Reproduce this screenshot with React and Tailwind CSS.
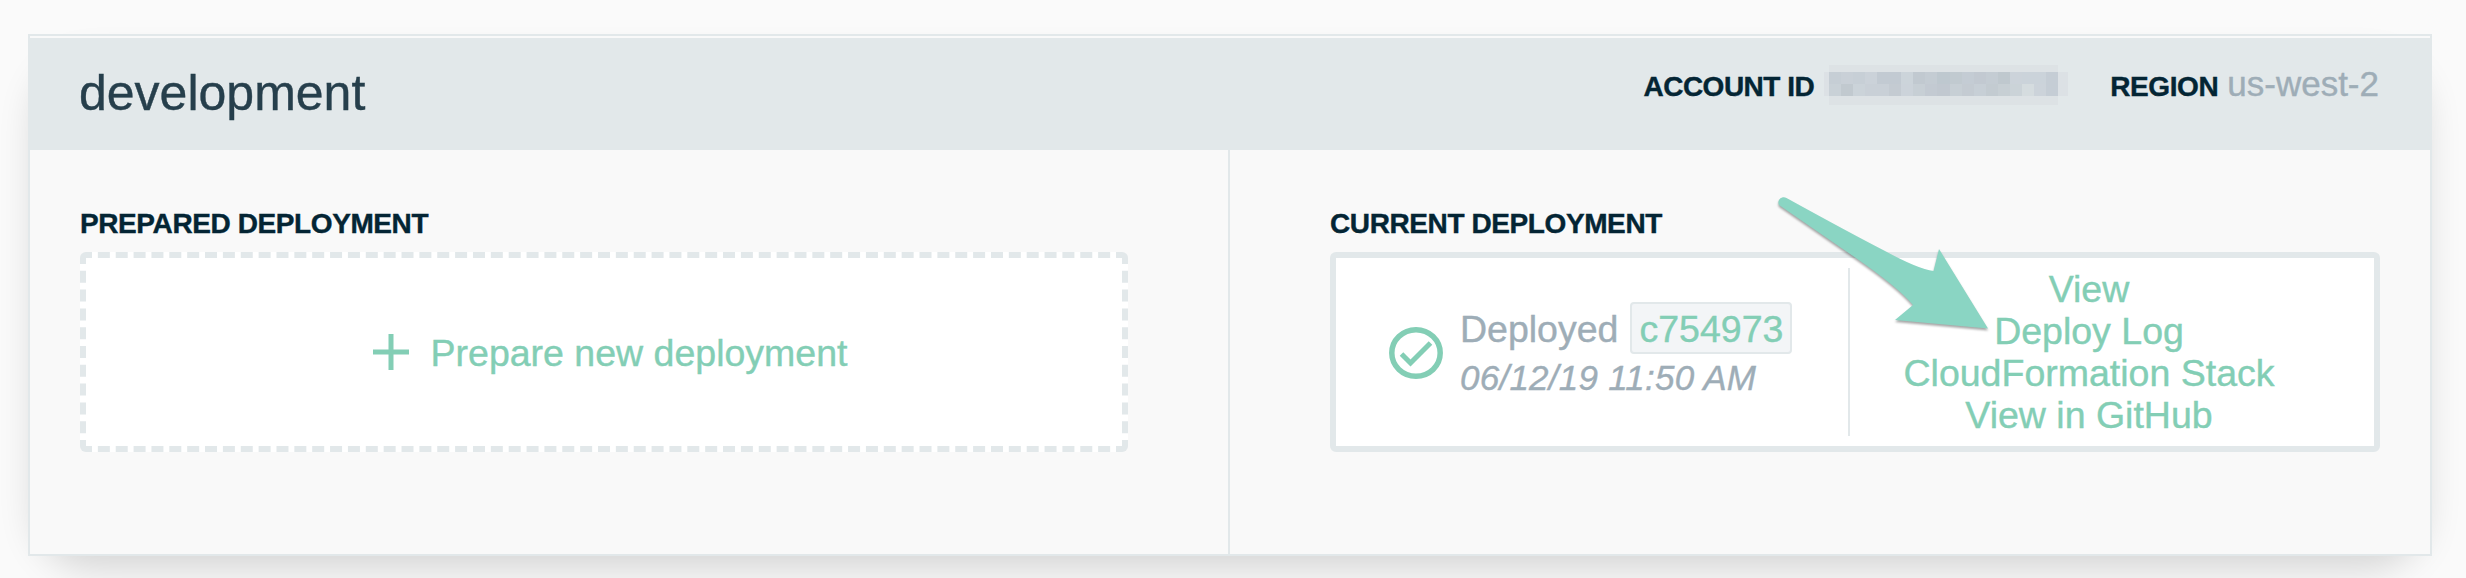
const mosaicTop = ['#c6ced5','#c9d0d7','#c7cfd6','#cbd2d9','#c2cad2','#c2cad2','#ccd4da','#c1c9d0','#c4ccd3','#bec8cf','#c1cad0','#c4ccd4','#c2c9d1','#c4ccd3','#bfc8ce','#ccd3da','#cbd3da','#cbd3da','#c5cdd5']
const mosaicBottom = ['#c9d1d7','#c1c9cf','#cbd3d9','#c9d0d7','#c9d0d7','#c4cbd2','#ccd3da','#c7cfd5','#c3cad2','#c1c8d0','#c7cfd5','#c4cbd2','#c7cfd6','#c3cbd1','#c7cfd4','#cbd3d8','#d5dcdf','#ccd3da','#c5cdd5']

function Mosaic() {
  return (
    <svg className="ml-[10px] block h-10 w-[244px]" viewBox="0 0 244 40" shapeRendering="crispEdges">
      <rect x="5" y="0" width="229" height="40" fill="#dde2e5" />
      <rect x="0" y="7" width="244" height="24" fill="#dce1e5" />
      {mosaicTop.map((c, i) => <rect key={i} x={5 + i * 12.05} y="7" width="12.5" height="12" fill={c} />)}
      {mosaicBottom.map((c, i) => <rect key={i} x={5 + i * 12.05} y="19" width="12.5" height="12" fill={c} />)}
    </svg>
  )
}

export default function App() {
  return (
    <div className="h-[578px] w-[2466px] overflow-hidden bg-[#fafafa] pt-[34px] pl-7 font-['Liberation_Sans',Arial,sans-serif] whitespace-nowrap [-webkit-text-stroke:0.4px]">
      <div className="relative isolate h-[522px] w-[2404px]">
        <div className="absolute inset-0 -z-10 rounded-[64px] shadow-[0_20px_36px_-7px_rgba(0,0,0,0.15)]" />
        <div className="flex h-full flex-col border-2 border-[#e2e8ea] bg-[#f9f9f9] pt-0.5">
          <header className="flex h-28 shrink-0 justify-between bg-[#e2e8ea] pr-[51px] pl-[49px]">
            <h1 className="pt-[26px] text-[50px] leading-[58px] text-[#263f4c]">development</h1>
            <div className="flex h-10 items-baseline pt-[26px] leading-10">
              <span className="text-[28px] font-bold tracking-[-0.5px] text-[#042534]">ACCOUNT ID</span>
              <div className="self-start pt-px"><Mosaic /></div>
              <span className="ml-[42px] text-[28px] font-bold tracking-[-0.4px] text-[#042534]">REGION</span>
              <span className="ml-[9px] text-[35px] text-[#9eadb7]">us-west-2</span>
            </div>
          </header>
          <main className="flex grow">
            <section className="w-[1200px] border-r-2 border-[#e2e8ea] pt-[58px] pl-[50px]">
              <h2 className="text-[28px] leading-8 font-bold tracking-[-0.4px] text-[#042534]">PREPARED DEPLOYMENT</h2>
              <div className="mt-3 flex h-[200px] w-[1048px] items-center justify-center rounded-md border-[6px] border-dashed border-[#e2e8ea] bg-white pl-3 text-[#83ceb5]">
                <svg className="h-9 w-9" viewBox="0 0 36 36" fill="none" stroke="currentColor" strokeWidth="5"><path d="M18 0v36M0 18h36" /></svg>
                <span className="ml-[22px] pt-0.5 text-[37.5px] leading-[42px]">Prepare new deployment</span>
              </div>
            </section>
            <section className="pt-[58px] pl-[100px]">
              <h2 className="text-[28px] leading-8 font-bold tracking-[-0.4px] text-[#042534]">CURRENT DEPLOYMENT</h2>
              <div className="mt-3 flex h-[200px] w-[1050px] items-center rounded-md border-[6px] border-[#e2e8ea] bg-white">
                <div className="flex h-[168px] w-[514px] items-center border-r-2 border-[#e2e8ea] pl-[53px]">
                  <svg className="mt-0.5 h-[52px] w-[54px]" viewBox="0 0 54 52" fill="none" stroke="#83ceb5"><ellipse cx="27" cy="26" rx="24.2" ry="23.2" strokeWidth="5.5" /><path d="M12.5 27l9 9 20-20" strokeWidth="5" /></svg>
                  <div className="ml-[17px] text-[#9eadb7]">
                    <div className="flex h-[52px] items-center text-[37.5px]">
                      <span className="pt-0.5">Deployed</span>
                      <span className="ml-3 flex h-[52px] w-[162px] items-center justify-center rounded border-2 border-[#e2e8ea] bg-[#f3f5f7] pt-0.5 text-[#83ceb5]">c754973</span>
                    </div>
                    <div className="text-[35px] leading-[48px] tracking-[0.25px] italic">06/12/19 11:50 AM</div>
                  </div>
                </div>
                <div className="flex grow flex-col items-center pr-[46px] text-[37.5px] leading-[42px] text-[#83ceb5]">
                  <a>View</a><a>Deploy Log</a><a>CloudFormation Stack</a><a>View in GitHub</a>
                </div>
              </div>
            </section>
          </main>
        </div>
        <svg className="absolute top-[146px] left-[1732px] h-[170px] w-[250px] drop-shadow-[0_2px_1px_rgba(0,0,0,0.35)]" viewBox="0 0 250 170">
          <path d="M26.500 18C22 15.500 16.500 20 19 25L93 76Q138 107 153 125L135 140L228 148.500L179 69L173.500 91Q158 89 125 71Q90 53 26.500 18Z" fill="#8ad5c3" />
        </svg>
      </div>
    </div>
  )
}
